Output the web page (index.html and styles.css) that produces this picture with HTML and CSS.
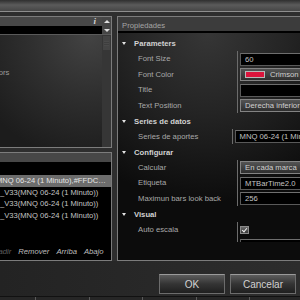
FILE: index.html
```html
<!doctype html>
<html lang="es">
<head>
    <meta charset="UTF-8">
    <title>Indicadores</title>
    <link rel="stylesheet" href="styles.css">
</head>
<body>
    <div class="dialog">
        <div class="titlebar"></div>

        <div class="main">
            <div class="left">
                <section class="panel browser">
                    <div class="browser-head">
                        <span class="info">i</span>
                        <span class="spin"><span class="arrow-up"></span></span>
                    </div>
                    <div class="browser-search">
                        <span class="spin"><span class="arrow-down"></span></span>
                    </div>
                    <div class="browser-body">
                        <ul class="tree">
                            <li>Indicators</li>
                        </ul>
                        <div class="scrollbar"><span class="thumb"></span></div>
                    </div>
                </section>

                <section class="panel applied">
                    <div class="applied-head"></div>
                    <ul class="applied-list">
                        <li class="selected">MNQ 06-24 (1 Minuto),#FFDC143C)</li>
                        <li>_V33(MNQ 06-24 (1 Minuto))</li>
                        <li>_V33(MNQ 06-24 (1 Minuto))</li>
                        <li>_V33(MNQ 06-24 (1 Minuto))</li>
                    </ul>
                    <div class="actions">
                        <a class="disabled">Añadir</a>
                        <a>Remover</a>
                        <a>Arriba</a>
                        <a>Abajo</a>
                    </div>
                </section>
            </div>

            <section class="panel props">
                <div class="props-head">Propiedades</div>
                <div class="grid">
                    <div class="cat">Parameters</div>
                    <div class="row"><span class="label">Font Size</span><span class="value"><span class="box">60</span></span></div>
                    <div class="row"><span class="label">Font Color</span><span class="value"><span class="box select"><span class="swatch"></span>Crimson</span></span></div>
                    <div class="row"><span class="label">Title</span><span class="value"><span class="box"></span></span></div>
                    <div class="row"><span class="label">Text Position</span><span class="value"><span class="box select">Derecha inferior</span></span></div>

                    <div class="cat">Series de datos</div>
                    <div class="row"><span class="label">Series de aportes</span><span class="value"><span class="box">MNQ 06-24 (1 Minuto)</span></span></div>

                    <div class="cat">Configurar</div>
                    <div class="row"><span class="label">Calcular</span><span class="value"><span class="box select">En cada marca</span></span></div>
                    <div class="row"><span class="label">Etiqueta</span><span class="value"><span class="box">MTBarTime2.0</span></span></div>
                    <div class="row"><span class="label">Maximun bars look back</span><span class="value"><span class="box">256</span></span></div>

                    <div class="cat">Visual</div>
                    <div class="row"><span class="label">Auto escala</span><span class="value"><span class="check"></span></span></div>
                    <div class="row"><span class="label">Escala</span><span class="value"><span class="box">1</span></span></div>
                </div>
                <div class="desc"></div>
            </section>
        </div>

        <div class="footer">
            <button class="btn">OK</button>
            <button class="btn">Cancelar</button>
        </div>

        <div class="statusbar">
            <span></span><span></span><span></span><span></span><span></span><span></span>
        </div>
    </div>
</body>
</html>
```

FILE: styles.css
```css
* {
    margin: 0;
    padding: 0;
    box-sizing: border-box;
}

li {
    list-style: none;
}

body {
    width: 300px;
    height: 300px;
    overflow: hidden;
    background: #2b2b2b;
    font: 7.7px "Liberation Sans", Arial, sans-serif;
    color: #a9a9a9;
}

.dialog {
    display: flex;
    flex-direction: column;
    height: 300px;
}

.titlebar {
    height: 12px;
    background: linear-gradient(#2f2f2f, #5b5b5b 45%, #464646);
    border-bottom: 1px solid #8e8e8e;
}

.main {
    display: flex;
    gap: 5px;
    height: 249px;
    padding-top: 4px;
    background: #2e2e2e;
}

.left {
    display: flex;
    flex-direction: column;
    gap: 4px;
    width: 112px;
    flex-shrink: 0;
}

.panel {
    border: 1px solid #7c7c7c;
    border-left: none;
    overflow: hidden;
}

/* top left: indicator browser */
.browser {
    display: flex;
    flex-direction: column;
    height: 132px;
}

.browser-head {
    display: flex;
    justify-content: flex-end;
    align-items: center;
    height: 9px;
    background: #484848;
}

.info {
    margin-right: 6px;
    font: italic bold 9px "Liberation Serif", serif;
    color: #d4d4d4;
    line-height: 9px;
}

.spin {
    display: flex;
    justify-content: center;
    align-items: center;
    width: 9px;
    height: 100%;
    background: #464646;
}

.arrow-up,
.arrow-down {
    width: 0;
    height: 0;
    border-left: 3px solid transparent;
    border-right: 3px solid transparent;
}

.arrow-up {
    border-bottom: 3px solid #e0e0e0;
}

.arrow-down {
    border-top: 3px solid #e0e0e0;
}

.browser-search {
    display: flex;
    justify-content: flex-end;
    height: 9px;
    background: #000;
    border-bottom: 1px solid #5a5a5a;
}

.browser-body {
    display: flex;
    flex: 1;
}

.tree {
    flex: 1;
    padding-top: 33px;
    background: radial-gradient(circle at 88% 0, #434343 0, #2f2f2f 60px, #1c1c1c 125px);
    line-height: 10px;
    color: #9c9c9c;
    white-space: nowrap;
    overflow: hidden;
}

.tree li {
    margin-left: -24px;
}

.scrollbar {
    width: 9px;
    padding-top: 1px;
    background: #363636;
}

.thumb {
    display: block;
    height: 14px;
    margin: 0 1px;
    background: repeating-linear-gradient(#4a4a4a 0 1px, #3e3e3e 1px 2px) center / 5px 5px no-repeat, #444;
}

/* bottom left: applied indicators */
.applied {
    display: flex;
    flex-direction: column;
    flex: 1;
    background: #000;
}

.applied-head {
    height: 9px;
    background: #474747;
}

.applied-list {
    flex: 1;
    padding-top: 13px;
    font-size: 7.6px;
    color: #c4c4c4;
}

.applied-list li {
    height: 11.6px;
    line-height: 11.6px;
    white-space: nowrap;
    overflow: hidden;
    text-overflow: ellipsis;
}

.applied-list .selected {
    padding-right: 4px;
    background: #6c6c6c;
    color: #e6e6e6;
    text-indent: -4px;
}

.actions {
    display: flex;
    gap: 7px;
    padding-bottom: 3px;
    line-height: 11px;
    font-style: italic;
    white-space: nowrap;
    color: #bdbdbd;
}

.actions a:first-child {
    margin-left: -11px;
}

.actions .disabled {
    color: #5f5f5f;
}

/* right: property grid */
.props {
    display: flex;
    flex-direction: column;
    width: 200px;
    flex-shrink: 0;
    border-left: 1px solid #7c7c7c;
    border-right: none;
}

.props-head {
    height: 16px;
    padding-left: 4px;
    line-height: 17px;
    background: #3c3c3c;
    border-bottom: 2px solid #000;
    color: #a4a4a4;
}

.grid {
    height: 209px;
    padding-top: 2.75px;
    overflow: hidden;
    background: radial-gradient(circle at 45% 0, #363636 0, #242424 80px, #0c0c0c 170px);
}

.cat,
.row {
    display: flex;
    align-items: center;
    height: 15.5px;
}

.cat {
    padding-left: 16px;
    font-weight: bold;
    color: #d2d2d2;
}

.cat::before {
    content: "";
    margin: 0 8px 0 -12px;
    border-left: 2.5px solid transparent;
    border-right: 2.5px solid transparent;
    border-top: 3px solid #e4e4e4;
}

.label {
    width: 120px;
    height: 100%;
    padding-left: 20px;
    line-height: 15.5px;
    border-right: 1px solid #6c6c6c;
    white-space: nowrap;
}

.value {
    display: flex;
    align-items: center;
    flex: 1;
    padding-left: 2px;
}

.box {
    display: flex;
    align-items: center;
    width: 100%;
    height: 13px;
    padding-left: 4px;
    background: #000;
    border: 1px solid #595959;
    border-top-color: #6e6e6e;
    color: #c2c2c2;
    white-space: nowrap;
    overflow: hidden;
}

.box.select {
    background: linear-gradient(#545454, #2e2e2e);
    border-color: #838383;
    color: #d0d0d0;
}

.swatch {
    width: 20px;
    height: 7px;
    margin-right: 5px;
    background: #dc143c;
    border: 1px solid #b8b8b8;
}

.check {
    position: relative;
    width: 9px;
    height: 8px;
    background: linear-gradient(#6a6a6a, #3a3a3a);
    border: 1px solid #8a8a8a;
}

.check::after {
    content: "";
    position: absolute;
    left: 2px;
    top: 0;
    width: 2px;
    height: 4px;
    border-right: 1px solid #f0f0f0;
    border-bottom: 1px solid #f0f0f0;
    transform: rotate(40deg);
}

.desc {
    flex: 1;
    background: #0c0c0c;
}

/* footer */
.footer {
    display: flex;
    justify-content: flex-end;
    gap: 5px;
    height: 35px;
    padding: 13px 4px 0 0;
    background: linear-gradient(90deg, #232323, #2d2d2d);
}

.btn {
    width: 66px;
    height: 20px;
    font: 10px "Liberation Sans", Arial, sans-serif;
    color: #d2d2d2;
    background: linear-gradient(#5c5c5c, #343434 50%, #1f1f1f);
    border: 1px solid #6c6c6c;
    border-top-color: #9a9a9a;
    outline: none;
}

.statusbar {
    display: grid;
    grid-template-columns: 36px repeat(5, 53.5px);
    flex: 1;
    background: #262626;
    border-top: 1px solid #111;
}

.statusbar span {
    border-right: 1px solid #5a5a5a;
}
```
